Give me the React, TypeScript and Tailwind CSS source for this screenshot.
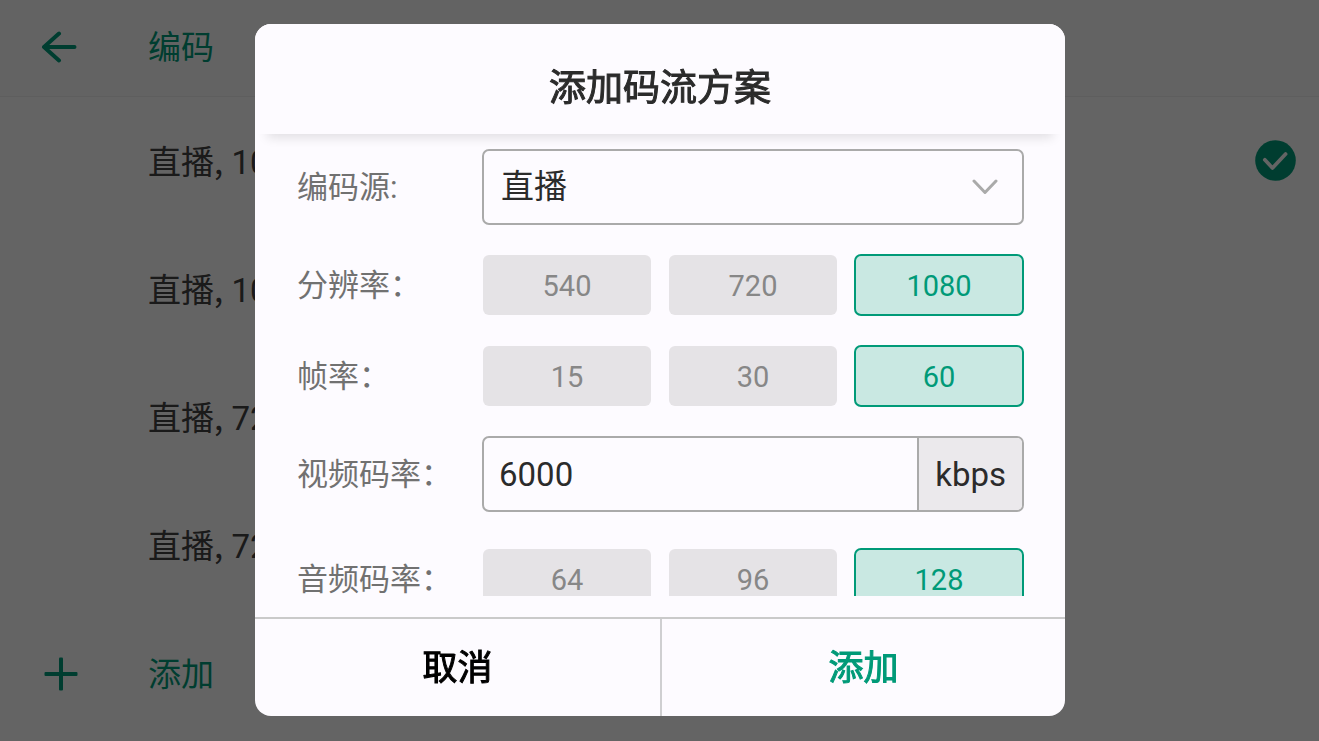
import { useState } from "react";

const PRESETS = [
  { source: "直播", height: "1080", selected: true },
  { source: "直播", height: "1080", selected: false },
  { source: "直播", height: "720", selected: false },
  { source: "直播", height: "720", selected: false },
];

function BackIcon() {
  return (
    <svg viewBox="0 0 36 32" className="h-8 w-9" fill="none" stroke="currentColor" strokeWidth="4" strokeLinecap="round" strokeLinejoin="round" aria-hidden="true">
      <path d="M33.500 16H3M18 2.600L3 16l15 13.400" />
    </svg>
  );
}

function PlusIcon() {
  return (
    <svg viewBox="0 0 36 36" className="size-9" fill="currentColor" aria-hidden="true">
      <rect x="1.500" y="16" width="33" height="4" rx="1" />
      <rect x="16" y="1.500" width="4" height="33" rx="1" />
    </svg>
  );
}

function CheckIcon() {
  return (
    <svg viewBox="0 0 41 41" className="h-[41px] w-[41px]" fill="none" aria-hidden="true">
      <circle cx="20.500" cy="20.500" r="20.300" fill="#009a78" />
      <path d="M9.800 19.800l7.700 8.200L30.600 14" stroke="#fafafa" strokeWidth="3.700" strokeLinecap="round" strokeLinejoin="round" />
    </svg>
  );
}

function ChevronIcon() {
  return (
    <svg viewBox="0 0 26 16" className="h-4 w-[26px]" fill="none" stroke="#aaaaaa" strokeWidth="3" strokeLinecap="round" strokeLinejoin="round" aria-hidden="true">
      <path d="M2 2l11 11.500L24 2" />
    </svg>
  );
}

type OptionRowProps = {
  id: string;
  label: string;
  options: string[];
  value: string;
  onChange: (value: string) => void;
};

function OptionRow({ id, label, options, value, onChange }: OptionRowProps) {
  return (
    <div className="flex items-center">
      <span id={id} className="w-[185px] shrink-0 pt-0.5 text-[31px] leading-[44px] text-[#717171]">{label}</span>
      <div role="group" aria-labelledby={id} className="grid flex-1 grid-cols-3 gap-4">
        {options.map((option) => (
          <button
            key={option}
            type="button"
            aria-pressed={option === value}
            onClick={() => onChange(option)}
            className={
              option === value
                ? "h-[62px] rounded-[7px] border-2 border-[#009a78] bg-[#c9e8e2] pt-1 text-[29px] text-[#009a78]"
                : "h-[62px] rounded-[7px] border border-transparent bg-[#e5e3e6] bg-clip-padding pt-1 text-[29px] text-[#878787]"
            }
          >
            {option}
          </button>
        ))}
      </div>
    </div>
  );
}

export default function App() {
  const [source, setSource] = useState("直播");
  const [resolution, setResolution] = useState("1080");
  const [frameRate, setFrameRate] = useState("60");
  const [videoRate, setVideoRate] = useState("6000");
  const [audioRate, setAudioRate] = useState("128");

  return (
    <div className="min-h-screen bg-[#fafafa] font-[Roboto,'Noto_Sans_CJK_SC',sans-serif]">
      <header className="flex h-[97px] items-center border-b border-[#eaeaea] bg-[#f8f8f8] pb-0.5 pl-[41px] text-[#009a78]">
        <button type="button" aria-label="返回" className="w-[107px] shrink-0">
          <BackIcon />
        </button>
        <h1 className="pt-0.5 text-[33px] leading-[48px]">编码</h1>
      </header>

      <main>
        <ul>
          {PRESETS.map((preset, index) => (
            <li key={index} className="flex h-32 items-center justify-between pb-px pl-[148px] pr-[23px]">
              <span className="pt-0.5 text-[33px] leading-[48px] text-[#414141]">
                <span className="font-['Noto_Sans_CJK_SC',sans-serif]">{preset.source},</span> {preset.height}
              </span>
              {preset.selected && <CheckIcon />}
            </li>
          ))}
        </ul>
        <button type="button" className="flex h-32 w-full items-center pl-[43px] text-[33px] leading-[48px] text-[#009a78]">
          <span className="w-[105px] shrink-0 pt-px"><PlusIcon /></span>
          <span className="pt-1">添加</span>
        </button>
      </main>

      <div className="fixed inset-0 z-20 flex items-center justify-center bg-black/60 pb-px pl-px">
        <form
          role="dialog"
          aria-modal="true"
          aria-labelledby="dialog-title"
          onSubmit={(event) => event.preventDefault()}
          className="w-full max-w-[810px] overflow-hidden rounded-2xl bg-[#fdfbff]"
        >
          <div className="relative z-10 bg-[#fdfbff] pt-10 pb-5 shadow-[0_16px_10px_-12px_rgba(0,0,0,0.11)]">
            <h2 id="dialog-title" className="text-center text-[37px] leading-[50px] font-normal text-[#2b2b2b] [-webkit-text-stroke:1px]">添加码流方案</h2>
          </div>

          <div className="mb-[21px] max-h-[462px] overflow-y-auto pt-[15px] pr-[41px] pl-[42px] [scrollbar-width:none]">
            <div className="flex flex-col gap-[29px]">
              <div className="flex items-center">
                <label htmlFor="source" className="w-[185px] shrink-0 pt-0.5 text-[31px] leading-[44px] text-[#717171]">编码源:</label>
                <div className="relative flex-1">
                  <select
                    id="source"
                    value={source}
                    onChange={(event) => setSource(event.target.value)}
                    className="block h-[76px] w-full appearance-none rounded-[7px] border-2 border-[#aaaaaa] bg-transparent px-[17px] text-[33px] text-[#2b2b2b]"
                  >
                    <option value="直播">直播</option>
                  </select>
                  <span className="pointer-events-none absolute inset-y-0 right-[26px] flex items-center">
                    <ChevronIcon />
                  </span>
                </div>
              </div>

              <OptionRow id="resolution" label="分辨率：" options={["540", "720", "1080"]} value={resolution} onChange={setResolution} />
              <OptionRow id="frame-rate" label="帧率：" options={["15", "30", "60"]} value={frameRate} onChange={setFrameRate} />

              <div className="flex items-center">
                <label htmlFor="video-rate" className="w-[185px] shrink-0 pt-0.5 text-[31px] leading-[44px] text-[#717171]">视频码率：</label>
                <div className="flex h-[76px] min-w-0 flex-1 overflow-hidden rounded-[7px] border-2 border-[#aaaaaa]">
                  <input
                    id="video-rate"
                    type="text"
                    inputMode="numeric"
                    value={videoRate}
                    onChange={(event) => setVideoRate(event.target.value)}
                    className="min-w-0 flex-1 bg-transparent px-[15px] pt-0.5 text-[33px] text-[#2b2b2b] outline-none"
                  />
                  <span className="flex items-center border-l-2 border-[#aaaaaa] bg-[#ebe9ec] px-4 pt-0.5 text-[33px] text-[#2b2b2b]">kbps</span>
                </div>
              </div>
            </div>

            <div className="pt-9 pb-4">
              <OptionRow id="audio-rate" label="音频码率：" options={["64", "96", "128"]} value={audioRate} onChange={setAudioRate} />
            </div>
          </div>

          <div className="grid grid-cols-2 border-t-2 border-[#cacaca] text-[35px] leading-[49px] font-normal [-webkit-text-stroke:1px]">
            <button type="button" className="pt-[25px] pb-[23px] text-black">取消</button>
            <button type="submit" className="border-l-2 border-[#cfcfd1] pt-[25px] pb-[23px] text-[#009a78]">添加</button>
          </div>
        </form>
      </div>
    </div>
  );
}
